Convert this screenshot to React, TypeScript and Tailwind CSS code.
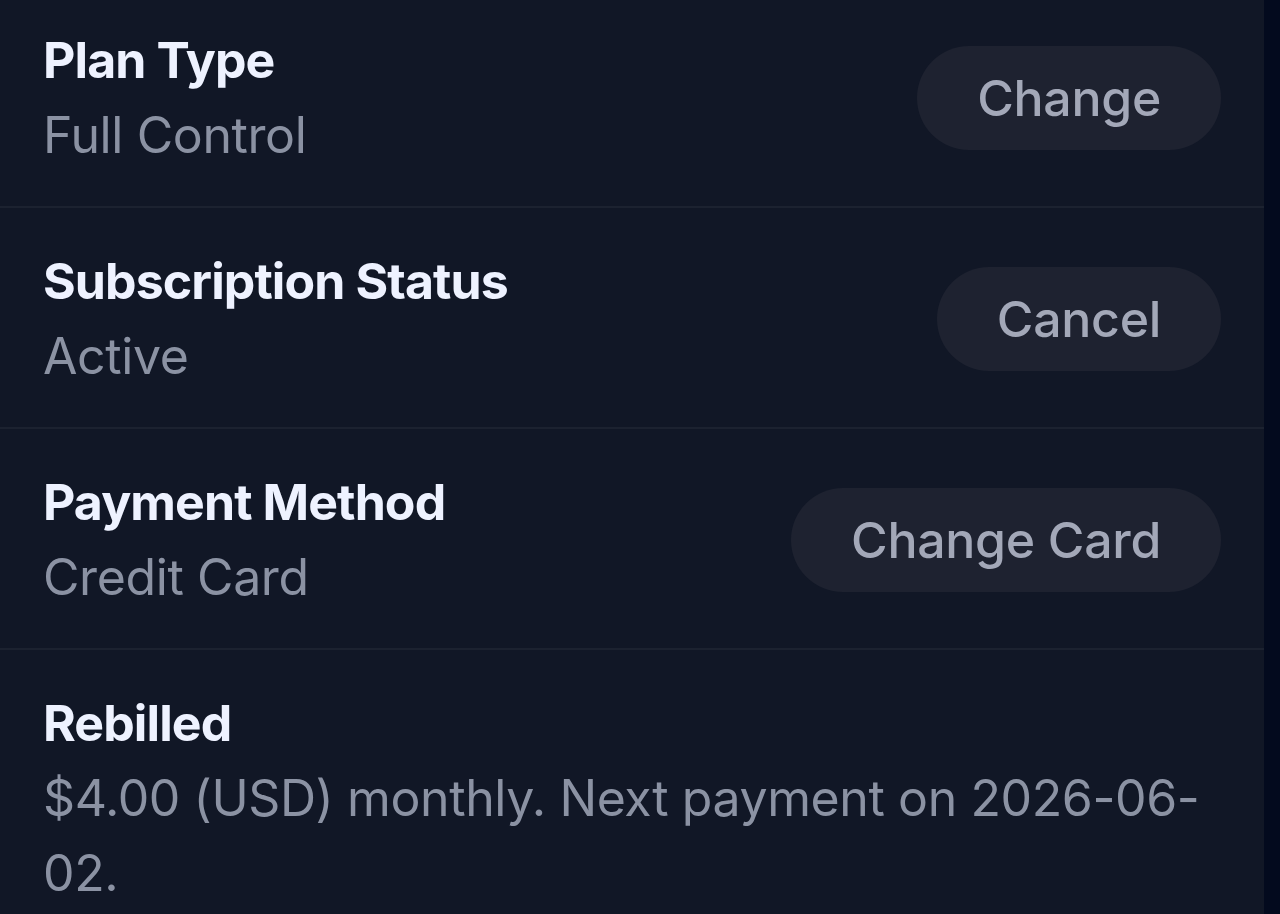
const rows = [
  { title: "Plan Type", value: "Full Control", action: "Change" },
  { title: "Subscription Status", value: "Active", action: "Cancel" },
  { title: "Payment Method", value: "Credit Card", action: "Change Card" },
];

function Row({
  title,
  value,
  action,
}: {
  title: string;
  value: string;
  action?: string;
}) {
  return (
    <div className="flex items-center justify-between gap-8 border-b-2 border-[#1c2230] px-[43px] pt-[36px] pb-[33px] last:border-b-0">
      <div className="min-w-0 flex-1">
        <p className="text-[50px] leading-[75px] font-bold tracking-[-0.9px] text-[#eef2ff]">{title}</p>
        <p className="text-[50px] leading-[75px] font-normal tracking-[-0.4px] text-[#8b92a3]">{value}</p>
      </div>
      {action && (
        <button className="h-[104px] shrink-0 rounded-full bg-[#1e2230] px-[60px] text-[50px] font-medium tracking-[-0.3px] text-[#a3a8b8]">
          {action}
        </button>
      )}
    </div>
  );
}

export default function App() {
  return (
    <div
      className="flex h-[914px] w-full overflow-hidden bg-[#030a1e]"
      style={{ fontFamily: "Inter, 'Open Sans', sans-serif" }}
    >
      <div className="w-[1264px] bg-[#111726]">
        <div className="-mt-[13px]">
          {rows.map((r) => (
            <Row key={r.title} {...r} />
          ))}
          <Row
            title="Rebilled"
            value="$4.00 (USD) monthly. Next payment on 2026-06-02."
          />
        </div>
      </div>
    </div>
  );
}
